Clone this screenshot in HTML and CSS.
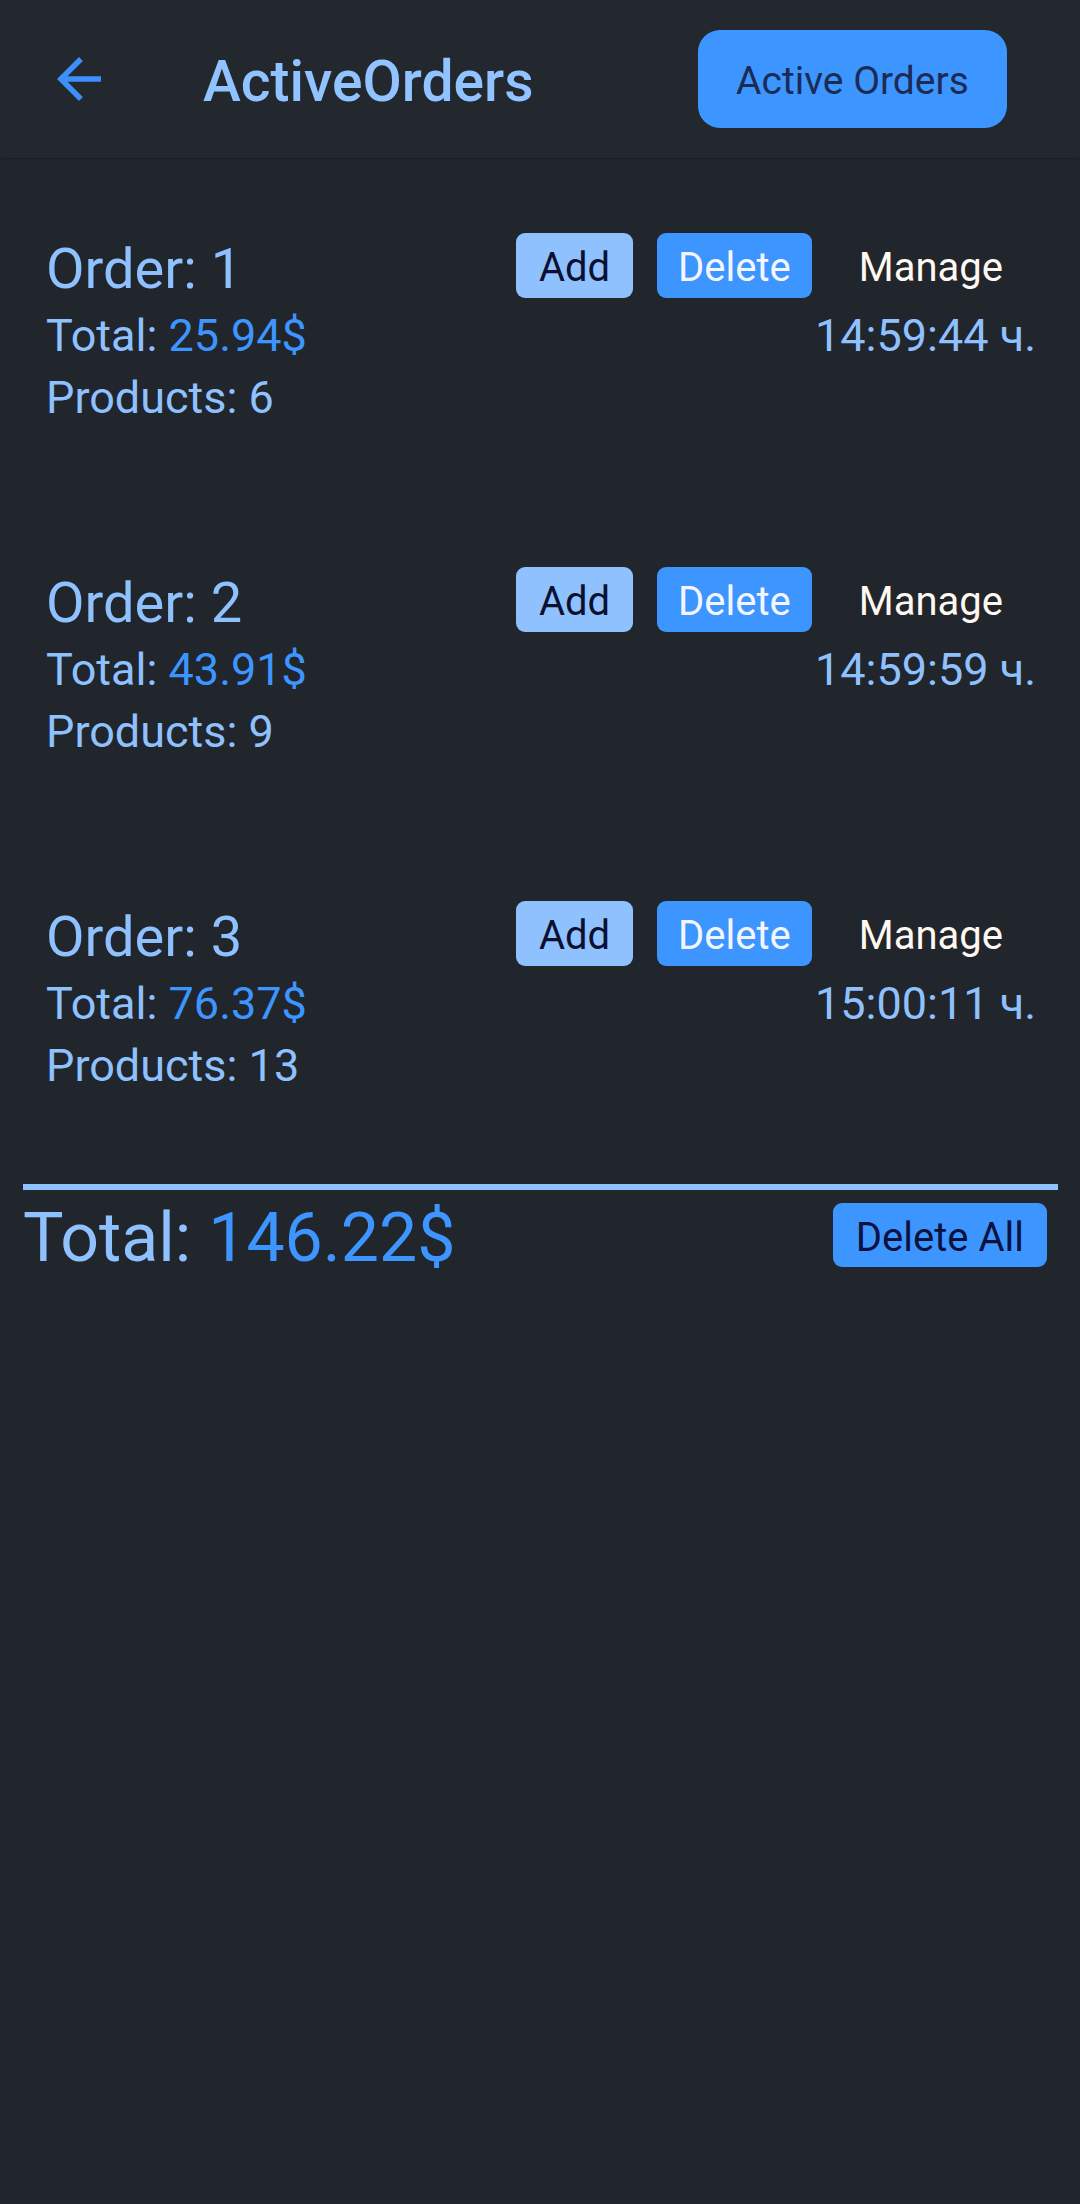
FILE: index.html
```html
<!DOCTYPE html>
<html lang="en">
<head>
<meta charset="utf-8">
<title>ActiveOrders</title>
<link rel="stylesheet" href="styles.css">
</head>
<body>
<header class="appbar">
  <button class="back" aria-label="Back">
    <svg viewBox="0 0 24 24" width="66" height="66"><path d="M20 11H7.83l5.59-5.59L12 4l-8 8 8 8 1.41-1.41L7.83 13H20v-2z"/></svg>
  </button>
  <h1 class="title">ActiveOrders</h1>
  <button class="pill">Active Orders</button>
</header>
<main class="orders">
  <section class="order">
    <div class="order-name">Order: 1</div>
    <div class="actions"><button class="btn btn-add">Add</button><button class="btn btn-del">Delete</button><button class="btn btn-manage">Manage</button></div>
    <div class="order-total">Total: <span class="val">25.94$</span></div>
    <div class="order-time">14:59:44 ч.</div>
    <div class="order-products">Products: 6</div>
  </section>
  <section class="order">
    <div class="order-name">Order: 2</div>
    <div class="actions"><button class="btn btn-add">Add</button><button class="btn btn-del">Delete</button><button class="btn btn-manage">Manage</button></div>
    <div class="order-total">Total: <span class="val">43.91$</span></div>
    <div class="order-time">14:59:59 ч.</div>
    <div class="order-products">Products: 9</div>
  </section>
  <section class="order">
    <div class="order-name">Order: 3</div>
    <div class="actions"><button class="btn btn-add">Add</button><button class="btn btn-del">Delete</button><button class="btn btn-manage">Manage</button></div>
    <div class="order-total">Total: <span class="val">76.37$</span></div>
    <div class="order-time">15:00:11 ч.</div>
    <div class="order-products">Products: 13</div>
  </section>
</main>
<footer class="summary">
  <div class="divider"></div>
  <div class="summary-row">
    <div class="grand">Total: <span class="val">146.22$</span></div>
    <button class="btn btn-all">Delete All</button>
  </div>
</footer>
</body>
</html>
```
FILE: styles.css
```css
* { box-sizing: border-box; }
html, body {
  margin: 0;
  padding: 0;
}
body {
  background: #21262d;
  width: 1080px;
  min-height: 2204px;
  font-family: Roboto, "Liberation Sans", sans-serif;
  color: #8fc1ff;
}
button {
  font-family: inherit;
  border: none;
  margin: 0;
  cursor: pointer;
}
.appbar {
  height: 158px;
  background: #23282f;
  display: flex;
  align-items: center;
  box-shadow: 0 1px 2px rgba(0,0,0,0.25);
}
.back {
  width: 66px;
  height: 66px;
  margin-left: 46px;
  padding: 0;
  background: transparent;
  display: flex;
}
.back svg { fill: #3d8ffc; }
.title {
  margin: 6px 0 0 91px;
  font-size: 57px;
  font-weight: 500;
  color: #90c3ff;
  line-height: 64px;
}
.pill {
  margin-left: auto;
  margin-right: 73px;
  height: 98px;
  width: 309px;
  border-radius: 22px;
  background: #3d96ff;
  color: #1c2b55;
  font-size: 39px;
  padding: 4px 0 0;
}
.orders {
  padding: 75px 44px 0 46px;
  display: flex;
  flex-direction: column;
  gap: 138px;
}
.order {
  display: grid;
  grid-template-columns: 1fr auto;
  grid-template-rows: 72px 62px 62px;
}
.order-name {
  font-size: 56px;
  line-height: 72px;
  color: #8fc1ff;
}
.actions {
  display: flex;
  align-items: flex-start;
  gap: 24px;
  justify-self: end;
}
.btn {
  height: 65px;
  padding: 4px 23px 0;
  border-radius: 9px;
  font-size: 40px;
}
.btn-add { background: #8fc1ff; color: #0b1030; }
.btn-del { background: #3d96ff; color: #f5f5ff; padding: 4px 21px 0; }
.btn-manage {
  background: transparent;
  color: #fff8f0;
  padding: 4px 23px 0;
  margin-right: 10px;
}
.order-total, .order-time, .order-products {
  font-size: 45px;
  line-height: 62px;
  color: #8fc1ff;
}
.order-time { justify-self: end; }
.val { color: #3d95ff; }
.summary {
  padding-top: 87px;
}
.divider {
  height: 6px;
  margin: 0 22px 0 23px;
  background: #8fc1ff;
}
.summary-row {
  display: flex;
  justify-content: space-between;
  align-items: flex-start;
  padding: 0 33px 0 23px;
}
.grand {
  margin-top: 8px;
  font-size: 68px;
  line-height: 80px;
  color: #8fc1ff;
}
.btn-all {
  margin-top: 13px;
  height: 64px;
  padding: 4px 23px 0;
  background: #3d96ff;
  color: #0b1240;
}
```
